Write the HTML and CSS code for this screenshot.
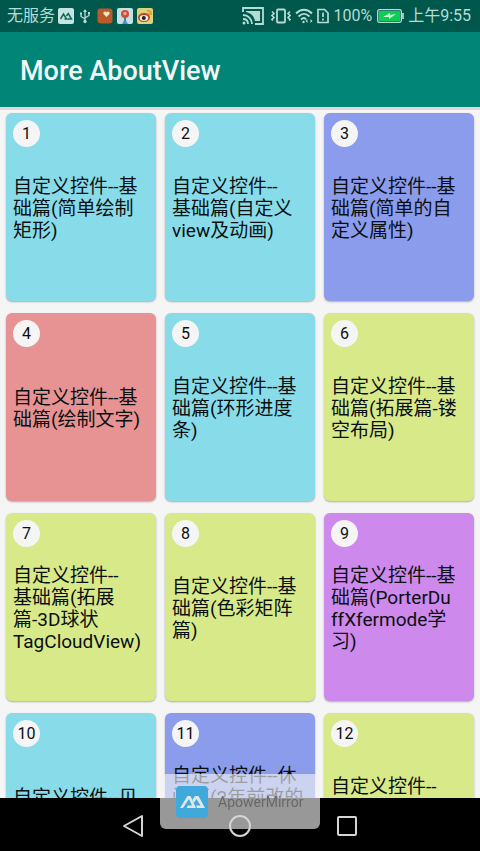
FILE: index.html
```html
<!DOCTYPE html>
<html lang="zh-CN">
<head>
<meta charset="utf-8">
<meta name="viewport" content="width=device-width, initial-scale=1">
<title>More AboutView</title>
<link rel="stylesheet" href="styles.css">
</head>
<body>
<div class="status">
  <div class="status-side status-left">
    <span class="carrier">无服务</span>
    <svg class="tile" viewBox="0 0 16 16"><rect width="16" height="16" rx="2" fill="#c5e5e3"/><path d="M2.500 11 5.500 6l3 5H6.500M8.300 8l2-2.500 3.200 5.500H9.500" fill="none" stroke="#17675c" stroke-width="1.500"/></svg>
    <svg class="usb" viewBox="0 0 12 16" fill="none" stroke="#b7dcd5" stroke-width="1.300"><path d="M6 2v11M2 6v2.500L6 11M10 5v2.500L6 10"/><path d="M4 4l2-3 2 3zM1 4.500h2v2H1zM9 4h2v2H9z" fill="#b7dcd5" stroke="none"/><circle cx="6" cy="13.500" r="1.700" fill="#b7dcd5" stroke="none"/></svg>
    <svg class="tile" viewBox="0 0 16 16"><rect x=".5" y=".5" width="15" height="15" rx="3" fill="#bd5a29"/><path d="M9.500 9 6.500 6c-1-2 2-3.500 3-1.500 1-2 4-.5 3 1.500z" fill="#f1e5c4"/></svg>
    <svg class="tile" viewBox="0 0 16 16"><rect width="16" height="16" rx="2" fill="#c5e1e5"/><path d="M5 16 8 11l3 5z" fill="#4a91c9"/><path d="M7 8h2v5H7z" fill="#4a78a8"/><circle cx="8" cy="6" r="4" fill="#cf4d3d"/><circle cx="8" cy="5.500" r="1.700" fill="#e9a58f"/></svg>
    <svg class="tile" viewBox="0 0 16 16"><rect width="16" height="16" rx="2" fill="#dcd37a"/><ellipse cx="7" cy="9.500" rx="6" ry="4.500" fill="#cb3d25"/><ellipse cx="7" cy="10" rx="4.300" ry="3" fill="#f3f0e4"/><circle cx="6.800" cy="10" r="2" fill="#222"/><path d="M10 3c3-1 5 1 4 4M10.500 5c1.500 0 2 .5 2 2" fill="none" stroke="#d98d24" stroke-width="1.200"/></svg>
  </div>
  <div class="status-side status-right">
    <svg class="cast" viewBox="0 0 22 18" fill="none" stroke="#b7dcd5" stroke-width="1.800"><path d="M1 5V1h20v16h-8M1 8c5 0 9 4 9 9M1 12c3 0 5 2 5 5"/><path d="M4 4h14v10h-5C12 9 9 6 4 5z" fill="#b7dcd5" stroke="none"/><circle cx="2" cy="16" r="1.500" fill="#b7dcd5" stroke="none"/></svg>
    <svg class="vibrate" viewBox="0 0 20 16" fill="none" stroke="#b7dcd5" stroke-width="1.800"><rect x="6" y="1.500" width="8" height="13" rx="1"/><path d="M1 3.500l2 2-2 2 2 2-2 2 1 1M19 3.500l-2 2 2 2-2 2 2 2-1 1" stroke-width="1.600"/></svg>
    <svg class="wifi" viewBox="0 0 18 16" fill="none" stroke="#b7dcd5" stroke-width="1.900"><path d="M1 5.500c5-5 11-5 16 0M3.500 8.500c4-3.500 7-3.500 11 0M6 11.500c2-2 4-2 5 0"/><circle cx="8.500" cy="14" r="1.200" fill="#b7dcd5" stroke="none"/><path d="M10.500 13l2-2v4zM17.500 13l-2-2v4z" fill="#b7dcd5" stroke="none"/></svg>
    <svg class="sim" viewBox="0 0 12 16" fill="none" stroke="#b7dcd5" stroke-width="1.700"><path d="M1 1.500h6.500L11 5v9.500H1z"/><path d="M6 4.500v4.500M6 10.500v2"/></svg>
    <span class="percent">100%</span>
    <svg class="battery" viewBox="0 0 27 14"><rect x=".7" y=".7" width="23.600" height="12.600" rx="1.500" fill="none" stroke="#b7dcd5" stroke-width="1.300"/><rect x="2" y="2" width="21" height="10" fill="#0bce52"/><path d="M6 8l7-4v2l6-1-7 5V8z" fill="#d3f3d9"/><path d="M26 4v6" stroke="#b7dcd5" stroke-width="1.700"/></svg>
    <span class="clock">上午9:55</span>
  </div>
</div>
<header class="toolbar"><h1>More AboutView</h1></header>
<main class="content">
  <ul class="grid">
    <li class="card cyan"><span class="num">1</span><p>自定义控件--基<br>础篇(简单绘制<br>矩形)</p></li>
    <li class="card cyan"><span class="num">2</span><p>自定义控件--<br>基础篇(自定义<br>view及动画)</p></li>
    <li class="card blue"><span class="num">3</span><p>自定义控件--基<br>础篇(简单的自<br>定义属性)</p></li>
    <li class="card red"><span class="num">4</span><p>自定义控件--基<br>础篇(绘制文字)</p></li>
    <li class="card cyan"><span class="num">5</span><p>自定义控件--基<br>础篇(环形进度<br>条)</p></li>
    <li class="card lime"><span class="num">6</span><p>自定义控件--基<br>础篇(拓展篇-镂<br>空布局)</p></li>
    <li class="card lime"><span class="num">7</span><p>自定义控件--<br>基础篇(拓展<br>篇-3D球状<br>TagCloudView)</p></li>
    <li class="card lime"><span class="num">8</span><p>自定义控件--基<br>础篇(色彩矩阵<br>篇)</p></li>
    <li class="card purple"><span class="num">9</span><p>自定义控件--基<br>础篇(PorterDu<br>ffXfermode学<br>习)</p></li>
    <li class="card cyan"><span class="num">10</span><p>自定义控件--贝<br>塞尔曲线</p></li>
    <li class="card blue"><span class="num">11</span><p>自定义控件--休<br>闲篇(2年前改的<br>自定义<br>控件)</p></li>
    <li class="card lime"><span class="num">12</span><p>自定义控件--<br>休闲篇<br>(动画)</p></li>
  </ul>
</main>
<nav class="navbar">
  <button type="button" aria-label="返回"><svg viewBox="0 0 24 24"><path d="M3 12 21 2v20z"/></svg></button>
  <button type="button" aria-label="主页"><svg viewBox="0 0 24 24"><circle cx="12" cy="12" r="10"/></svg></button>
  <button type="button" aria-label="最近任务"><svg viewBox="0 0 24 24"><rect x="3" y="3" width="18" height="18" rx="1"/></svg></button>
</nav>
<div class="mirror">
  <svg viewBox="0 0 32 32"><rect width="32" height="32" rx="4" fill="#40a9dc"/><path d="M4 22 11.500 10h3L20 22H10.500l1.500-2.500h4L13 13 7 22zM16.500 13.500 19 10h3.500L29 22h-8l-1-2.500h4.500L20.500 13l-2.500 4z" fill="#e2e8ea"/></svg>
  <span>ApowerMirror</span>
</div>
</body>
</html>
```
FILE: styles.css
```css
* {
  box-sizing: border-box;
}

body {
  margin: 0;
  height: 100vh;
  display: flex;
  flex-direction: column;
  background: #f5f5f5;
  color: #0a0f12;
  font-family: Roboto, "Noto Sans CJK SC", sans-serif;
}

.status {
  flex: none;
  height: 32px;
  padding: 0 9px 0 7px;
  display: flex;
  justify-content: space-between;
  align-items: center;
  background: #00574b;
  color: #b7dcd5;
  font-size: 16px;
  line-height: 32px;
  white-space: nowrap;
}

.status-side {
  display: flex;
  align-items: center;
}

.status-left {
  gap: 3px;
}

.status-right {
  gap: 4px;
}

.tile {
  width: 16px;
  height: 16px;
  margin-right: 1px;
}

.usb {
  width: 12px;
  height: 16px;
  margin: 0 3px 0 1px;
}

.cast {
  width: 22px;
  height: 18px;
  margin-right: 3px;
}

.vibrate {
  width: 20px;
  height: 16px;
}

.wifi {
  width: 18px;
  height: 16px;
}

.sim {
  width: 12px;
  height: 16px;
}

.percent {
  margin-right: 1px;
}

.battery {
  width: 27px;
  height: 14px;
}

.toolbar {
  flex: none;
  height: 75px;
  padding: 2px 20px 0;
  display: flex;
  align-items: center;
  background: #008577;
}

.toolbar h1 {
  margin: 0;
  color: #f5f5f5;
  font-size: 27px;
  font-weight: 500;
  line-height: 32px;
}

.content {
  flex: 1;
  min-height: 0;
  overflow: hidden;
  border-top: 3px solid #e2d5dc;
}

.grid {
  margin: 0;
  padding: 3px 6px;
  display: grid;
  grid-template-columns: repeat(3, 1fr);
  gap: 12px 9px;
  list-style: none;
}

.card {
  position: relative;
  min-height: 188px;
  padding: 4px 7px 0;
  display: flex;
  align-items: center;
  border-radius: 6px;
  box-shadow: 0 1px 2px rgba(0, 0, 0, 0.3);
}

.card p {
  margin: 0;
  font-size: 19px;
  line-height: 22px;
  white-space: nowrap;
}

.num {
  position: absolute;
  top: 7px;
  left: 7px;
  width: 27px;
  height: 27px;
  border-radius: 50%;
  background: #f5f5f5;
  font-size: 16px;
  line-height: 28px;
  text-align: center;
}

.cyan {
  background: #88dce9;
}

.blue {
  background: #8a9ceb;
}

.red {
  background: #e89393;
}

.lime {
  background: #d8e98a;
}

.purple {
  background: #cd89eb;
}

.navbar {
  flex: none;
  height: 53px;
  padding-top: 3px;
  display: flex;
  justify-content: center;
  align-items: center;
  gap: 83px;
  background: #000;
}

.navbar button {
  width: 24px;
  height: 24px;
  padding: 0;
  border: 0;
  background: none;
}

.navbar svg {
  display: block;
  fill: none;
  stroke: #d5d5d5;
  stroke-width: 2;
  stroke-linejoin: round;
}

.navbar button:nth-child(2) {
  position: relative;
  z-index: 2;
}

.mirror {
  position: fixed;
  bottom: 22px;
  left: 50%;
  z-index: 1;
  width: 160px;
  height: 55px;
  margin-left: -80px;
  padding: 0 16px;
  display: flex;
  align-items: center;
  gap: 10px;
  border-radius: 6px;
  background: rgba(245, 245, 245, 0.62);
  color: #686868;
  font-size: 14px;
}

.mirror svg {
  flex: none;
  width: 32px;
  height: 32px;
}
```
